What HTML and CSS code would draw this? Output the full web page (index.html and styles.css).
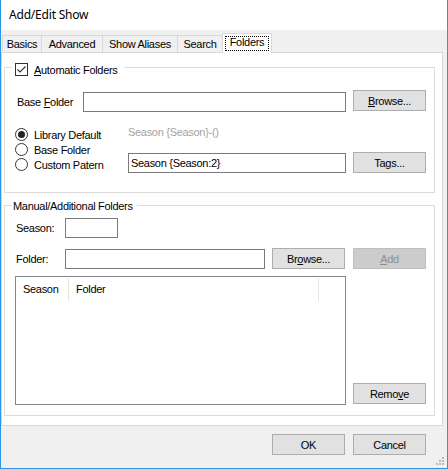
FILE: index.html
```html
<!DOCTYPE html>
<html>
<head>
<meta charset="utf-8">
<title>Add/Edit Show</title>
<link rel="stylesheet" href="styles.css">
</head>
<body>
<div class="window">
  <div class="titlebar">Add/Edit Show</div>
  <div class="tabs">
    <div class="tab tab-basics">Basics</div>
    <div class="tab tab-advanced">Advanced</div>
    <div class="tab tab-aliases">Show Aliases</div>
    <div class="tab tab-search">Search</div>
    <div class="tab tab-selected"><span class="focus">Folders</span></div>
  </div>
  <div class="page">
    <div class="group group-auto">
      <div class="legend legend-auto">
        <span class="checkbox">
          <svg width="11" height="11" viewBox="0 0 11 11"><path d="M1.5 5.5 L4 8 L9.5 2.5" fill="none" stroke="#333" stroke-width="1.1"/></svg>
        </span>
        <span><span class="mn">A</span>utomatic Folders</span>
      </div>
      <div class="row row-base">
        <span class="label label-base"><span>Base <span class="mn">F</span>older</span></span>
        <input class="textbox tb-base" type="text" value="">
        <button class="btn btn-browse1"><span class="mn">B</span>rowse...</button>
      </div>
      <div class="radio-section">
        <div class="radios">
          <div class="radio-row"><span class="radio checked"></span><span>Library Default</span></div>
          <div class="radio-row"><span class="radio"></span><span>Base Folder</span></div>
          <div class="radio-row"><span class="radio"></span><span>Custom Patern</span></div>
        </div>
        <div class="pattern-col">
          <div class="preview">Season {Season}-()</div>
          <div class="pattern-row">
            <input class="textbox tb-pattern" type="text" value="Season {Season:2}">
            <button class="btn btn-tags">Tags...</button>
          </div>
        </div>
      </div>
    </div>
    <div class="group group-manual">
      <div class="legend legend-manual">Manual/Additional Folders</div>
      <div class="row row-season">
        <span class="label label-short">Season:</span>
        <input class="textbox tb-season" type="text" value="">
      </div>
      <div class="row row-folder">
        <span class="label label-short">Folder:</span>
        <input class="textbox tb-folder" type="text" value="">
        <button class="btn btn-browse2">Br<span class="mn">o</span>wse...</button>
        <button class="btn btn-add" disabled><span class="mn">A</span>dd</button>
      </div>
      <div class="row row-list">
        <div class="listview">
          <div class="lv-header">
            <div class="lv-col lv-col-season">Season</div>
            <div class="lv-col lv-col-folder">Folder</div>
          </div>
        </div>
        <button class="btn btn-remove">Remo<span class="mn">v</span>e</button>
      </div>
    </div>
  </div>
  <div class="footer">
    <button class="btn">OK</button>
    <button class="btn">Cancel</button>
  </div>
  <svg class="grip" width="10" height="10" viewBox="0 0 10 10">
    <rect x="6" y="0" width="2" height="2" fill="#b9b9b9"/>
    <rect x="3" y="3" width="2" height="2" fill="#b9b9b9"/>
    <rect x="6" y="3" width="2" height="2" fill="#b9b9b9"/>
    <rect x="0" y="6" width="2" height="2" fill="#b9b9b9"/>
    <rect x="3" y="6" width="2" height="2" fill="#b9b9b9"/>
    <rect x="6" y="6" width="2" height="2" fill="#b9b9b9"/>
  </svg>
</div>
</body>
</html>
```
FILE: styles.css
```css
* { box-sizing: border-box; }
html, body { margin: 0; padding: 0; background: #f0f0f0; }
body {
  width: 448px;
  height: 469px;
  font-family: "Liberation Sans", Arial, sans-serif;
  font-size: 11px;
  letter-spacing: -0.3px;
  color: #000;
}
.window {
  position: relative;
  width: 448px;
  height: 469px;
  border: 1px solid #2b97e3;
  border-top: 0;
  background: #f0f0f0;
  display: flex;
  flex-direction: column;
}
.titlebar {
  height: 30px;
  line-height: 30px;
  background: #fff;
  padding-left: 8px;
  font-family: "Noto Sans", "Open Sans", sans-serif;
  font-size: 12px;
  letter-spacing: -0.2px;
}
.tabs {
  display: flex;
  align-items: flex-end;
  height: 22px;
  padding-left: 1px;
}
.tab {
  height: 17px;
  line-height: 16px;
  border: 1px solid #d9d9d9;
  border-bottom: 0;
  background: #f0f0f0;
  text-align: center;
  margin-left: -1px;
}
.tab-basics { width: 40px; margin-left: 0; }
.tab-advanced { width: 62px; }
.tab-aliases { width: 76px; }
.tab-search { width: 46px; }
.tab-selected {
  position: relative;
  z-index: 1;
  width: 50px;
  height: 20px;
  margin-bottom: -1px;
  margin-left: -1px;
  background: #fff;
  padding: 2px;
  display: flex;
}
.focus {
  flex: 1;
  height: 15px;
  line-height: 13px;
  outline: 1px dotted #000;
  outline-offset: -1px;
  text-align: center;
}
.page {
  height: 374px;
  margin-right: 4px;
  border: 1px solid #d9d9d9;
  background: #fff;
  padding: 14px 7px 0 2px;
}
.group {
  border: 1px solid #dcdcdc;
  display: flex;
  flex-direction: column;
}
.group-auto { height: 126px; }
.group-manual { height: 211px; margin-top: 12px; }
.legend {
  align-self: flex-start;
  display: flex;
  align-items: center;
  height: 15px;
  background: #fff;
}
.legend-auto {
  margin: -6px 0 0 7px;
  padding: 0 6px 0 3px;
  gap: 6px;
}
.legend-manual {
  margin: -8px 0 0 7px;
  padding: 0 4px 0 1px;
}
.checkbox {
  width: 13px;
  height: 13px;
  border: 1px solid #333;
  background: #fff;
  display: flex;
  align-items: center;
  justify-content: center;
}
.mn { text-decoration: underline; }
.row { display: flex; }
.label { display: flex; align-items: center; }
.row-base { margin-top: 13px; height: 22px; padding-left: 12px; }
.label-base { width: 66px; height: 22px; padding-top: 1px; }
.textbox {
  display: block;
  height: 20px;
  border: 1px solid #7a7a7a;
  background: #fff;
  padding: 0 2px;
  margin: 0;
  font: inherit;
  letter-spacing: inherit;
  color: #000;
  outline: none;
}
.tb-base { width: 263px; margin-top: 2px; }
.btn {
  width: 73px;
  height: 21px;
  border: 1px solid #adadad;
  background: #e1e1e1;
  font: inherit;
  letter-spacing: inherit;
  color: #000;
  padding: 0;
  margin: 0;
  text-align: center;
}
.btn-browse1 { margin-left: 7px; }
.radio-section {
  display: flex;
  margin-top: 15px;
  padding-left: 10px;
}
.radios { width: 113px; }
.radio-row {
  height: 15px;
  display: flex;
  align-items: center;
  gap: 6px;
}
.radio {
  width: 13px;
  height: 13px;
  border-radius: 50%;
  border: 1px solid #333;
  background: #fff;
  display: flex;
  align-items: center;
  justify-content: center;
}
.radio.checked::after {
  content: "";
  width: 7px;
  height: 7px;
  border-radius: 50%;
  background: #222;
}
.pattern-col { display: flex; flex-direction: column; }
.preview {
  height: 15px;
  line-height: 15px;
  margin-top: -2px;
  color: #a3a3a3;
}
.pattern-row { display: flex; margin-top: 12px; }
.tb-pattern { width: 218px; margin-top: 1px; }
.btn-tags { margin-left: 7px; }
.row-season { margin-top: 5px; height: 20px; padding-left: 11px; }
.label-short { width: 49px; }
.tb-season { width: 53px; }
.row-folder { margin-top: 10px; height: 21px; padding-left: 11px; }
.tb-folder { width: 200px; margin-top: 1px; }
.btn-browse2 { margin-left: 7px; }
.btn-add {
  margin-left: 8px;
  background: #cccccc;
  border-color: #bfbfbf;
  color: #8c8c8c;
}
.row-list { margin-top: 7px; padding-left: 10px; align-items: flex-end; }
.listview {
  width: 331px;
  height: 129px;
  border: 1px solid #828790;
  background: #fff;
}
.lv-header { display: flex; margin-top: 1px; height: 23px; }
.lv-col {
  height: 23px;
  line-height: 23px;
  border-right: 1px solid #e5e5e5;
  padding-left: 7px;
}
.lv-col-season { width: 53px; }
.lv-col-folder { width: 250px; }
.btn-remove { margin-left: 7px; margin-bottom: 1px; }
.footer {
  display: flex;
  justify-content: flex-end;
  gap: 8px;
  padding: 8px 21px 0 0;
}
.grip {
  position: absolute;
  right: 1px;
  bottom: 1px;
}
```
